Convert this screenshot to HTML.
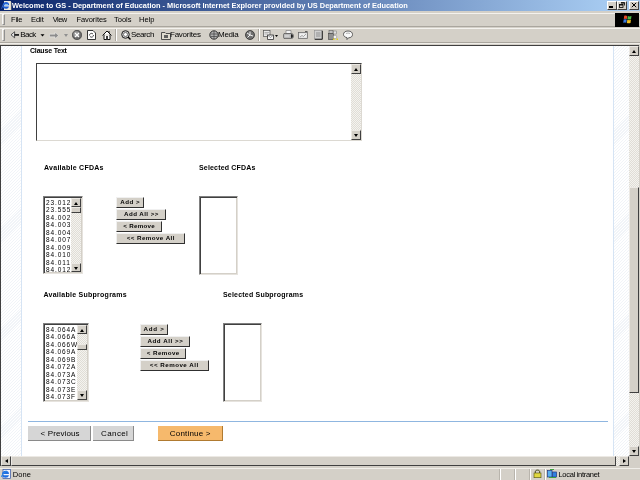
<!DOCTYPE html>
<html><head><meta charset="utf-8">
<style>
*{margin:0;padding:0;box-sizing:border-box}
html,body{width:640px;height:480px;overflow:hidden;background:#d4d0c8;font-family:"Liberation Sans",sans-serif}
body{will-change:transform}
.a{position:absolute}
#title{left:0;top:0;width:640px;height:11px;background:linear-gradient(to right,#0a246a 0px,#a6caf0 605px)}
#title .t{left:12px;top:0px;color:#fff;font-weight:bold;font-size:7.4px;line-height:11px;white-space:nowrap}
.tb{background:#d4d0c8;border-top:1px solid #fff;border-left:1px solid #fff;border-right:1px solid #808080;border-bottom:1px solid #808080}
.menu{font-size:7.5px;color:#000;line-height:8px;white-space:nowrap}
.tool{font-size:8px;color:#000;line-height:8px;white-space:nowrap}
#content{left:0;top:45px;width:640px;height:422px;background:#fff;border-top:1px solid #404040;border-left:1px solid #404040}
.stripe{background:repeating-linear-gradient(135deg,#fff 0px,#fff 1.3px,#f1f4f8 1.3px,#f1f4f8 2.1px)}
.lbl{font-family:"Liberation Sans",sans-serif;font-weight:bold;font-size:7px;color:#000;line-height:8px;white-space:nowrap}
.btn{background:#d4d0c8;border-top:1px solid #f0f0f0;border-left:1px solid #f0f0f0;border-right:1px solid #303030;border-bottom:1px solid #303030}
.bt{font-size:6.2px;font-weight:bold;line-height:7px;white-space:nowrap;color:#000}
.inset{background:#fff;border-top:1px solid #808080;border-left:1px solid #808080;border-right:1px solid #e6e3de;border-bottom:1px solid #e6e3de;box-shadow:inset 1px 1px 0 #404040,inset -1px -1px 0 #d4d0c8}
.sbtrack{background:repeating-conic-gradient(#f4f3ef 0 25%,#e0ddd6 0 50%) 0 0/2px 2px}
.sbbtn{background:#d4d0c8;border-top:1px solid #ece9e4;border-left:1px solid #ece9e4;border-right:1px solid #404040;border-bottom:1px solid #404040}
.list{font-size:6.5px;line-height:7.45px;color:#000;white-space:nowrap}
.up,.dn,.lt,.rt{position:absolute;width:0;height:0}
.up,.dn{left:2px;top:2.5px;border-left:2.5px solid transparent;border-right:2.5px solid transparent}
.up{border-bottom:3px solid #000}.dn{border-top:3px solid #000}
.lt,.rt{left:2.5px;top:1.5px;border-top:2.5px solid transparent;border-bottom:2.5px solid transparent}
.lt{border-right:3px solid #000}.rt{border-left:3px solid #000}
.st{font-size:7.5px;line-height:8px;color:#000;white-space:nowrap}
.ft{font-size:8px;line-height:8px;color:#000;white-space:nowrap}
</style></head><body>
<!-- title bar -->
<div id="title" class="a">
  <svg class="a" style="left:1px;top:0px" width="11" height="11" viewBox="0 0 11 11">
 <rect x="3" y="1" width="7" height="9" fill="#f0ece0"/>
 <path d="M9 1 L10 2 L10 10" stroke="#c0b8a0" stroke-width="0.6" fill="none"/>
 <path d="M1.6 5.6 C1.6 3.2 3.2 2 5 2 C6.9 2 8.2 3.2 8.2 5.2 L3.6 5.2 M3.6 6.4 L8 6.4 C7.6 8 6.4 8.8 4.9 8.8 C3 8.8 1.6 7.8 1.6 5.6 Z" fill="#1e5fd8"/>
 <rect x="3.6" y="4.2" width="3.3" height="1.2" fill="#a8d8f8"/>
 <path d="M0.6 8.8 C1 6.5 2.5 4 5.5 2.6" stroke="#3a70d0" stroke-width="0.8" fill="none"/>
</svg>
  <div class="a t">Welcome to GS - Department of Education - Microsoft Internet Explorer provided by US Department of Education</div>
</div>

<!-- separator under title -->
<div class="a" style="left:0;top:11px;width:640px;height:1px;background:#d4d0c8"></div>
<!-- menu band -->
<div class="a" style="left:0;top:13px;width:640px;height:1px;background:#f4f2ee"></div>
<div class="a" style="left:0;top:26px;width:640px;height:1px;background:#aaa69e"></div>
<div class="a" style="left:2px;top:14px;width:3px;height:11px;border-left:1px solid #f8f8f8;border-top:1px solid #f8f8f8;border-right:1px solid #909090;border-bottom:1px solid #909090"></div>
<div id="mn1" class="a menu" style="left:11px;top:16px;letter-spacing:-0.2px">File</div>
<div id="mn2" class="a menu" style="left:31px;top:16px;letter-spacing:-0.067px">Edit</div>
<div id="mn3" class="a menu" style="left:52.8px;top:16px;letter-spacing:-0.6px">View</div>
<div id="mn4" class="a menu" style="left:76.4px;top:16px;letter-spacing:-0.05px">Favorites</div>
<div id="mn5" class="a menu" style="left:114px;top:16px;letter-spacing:0px">Tools</div>
<div id="mn6" class="a menu" style="left:139px;top:16px;letter-spacing:0px">Help</div>
<!-- windows logo box -->
<div class="a" style="left:615px;top:13px;width:24px;height:14px;background:#000"></div>
<svg class="a" style="left:622px;top:15px" width="11" height="9" viewBox="0 0 11 9">
 <path d="M2.2 0.8 Q3.5 0.2 5.2 0.9 L4.8 4 Q3.2 3.4 1.8 4 Z" fill="#e84a28"/>
 <path d="M5.8 1.1 Q7.5 1.8 9.5 1 L9 4.2 Q7.2 4.9 5.4 4.2 Z" fill="#48b848"/>
 <path d="M1.7 4.6 Q3.2 4 4.7 4.6 L4.3 7.8 Q2.8 7.2 1.2 7.8 Z" fill="#3878e0"/>
 <path d="M5.3 4.8 Q7.1 5.5 8.9 4.8 L8.5 8 Q6.7 8.6 4.9 8 Z" fill="#f0c020"/>
</svg>
<!-- toolbar band -->
<div class="a" style="left:0;top:28px;width:640px;height:1px;background:#f4f2ee"></div>
<div class="a" style="left:0;top:42px;width:640px;height:1px;background:#aaa69e"></div>
<div class="a" style="left:2px;top:29px;width:3px;height:12px;border-left:1px solid #f8f8f8;border-top:1px solid #f8f8f8;border-right:1px solid #909090;border-bottom:1px solid #909090"></div>
<div class="a" style="left:0;top:43px;width:640px;height:1px;background:#f0eee9"></div>

<!-- content frame -->
<div class="a" style="left:0;top:45px;width:639px;height:421px;background:#fff;border-top:1px solid #404040;border-left:1px solid #404040"></div>
<div class="a stripe" style="left:1px;top:46px;width:20px;height:410px"></div>
<div class="a" style="left:21px;top:46px;width:1px;height:410px;background:#d6e4f4"></div>
<div class="a" style="left:613px;top:46px;width:1px;height:410px;background:#d6e4f4"></div>
<div class="a stripe" style="left:614px;top:46px;width:15px;height:410px"></div>
<!-- vertical scrollbar -->
<div class="a sbtrack" style="left:629px;top:46px;width:10px;height:410px"></div>
<div class="a sbbtn" style="left:629px;top:46px;width:10px;height:10px"><div class="up"></div></div>
<div class="a sbbtn" style="left:629px;top:187px;width:10px;height:206px"></div>
<div class="a sbbtn" style="left:629px;top:446px;width:10px;height:10px"><div class="dn"></div></div>
<!-- horizontal scrollbar -->
<div class="a sbtrack" style="left:1px;top:456px;width:628px;height:10px"></div>
<div class="a sbbtn" style="left:1px;top:456px;width:10px;height:10px"><div class="lt"></div></div>
<div class="a sbbtn" style="left:11px;top:456px;width:605px;height:10px"></div>
<div class="a sbbtn" style="left:619px;top:456px;width:10px;height:10px"><div class="rt"></div></div>
<div class="a" style="left:629px;top:456px;width:11px;height:11px;background:#d4d0c8"></div>
<div class="a" style="left:639px;top:45px;width:1px;height:422px;background:#d4d0c8"></div>

<!-- Clause text -->
<div id="l1" class="a lbl" style="left:30px;top:47px;letter-spacing:-0.182px">Clause Text</div>
<div class="a" style="left:36px;top:63px;width:326px;height:78px;background:#fff;border-top:1px solid #404040;border-left:1px solid #404040;border-right:1px solid #dcd9d2;border-bottom:1px solid #dcd9d2"></div>
<div class="a sbtrack" style="left:351px;top:64px;width:10px;height:76px"></div>
<div class="a sbbtn" style="left:351px;top:64px;width:10px;height:10px"><div class="up"></div></div>
<div class="a sbbtn" style="left:351px;top:130px;width:10px;height:10px"><div class="dn"></div></div>

<!-- CFDAs -->
<div id="l2" class="a lbl" style="left:44px;top:164px;letter-spacing:0.267px">Available CFDAs</div>
<div id="l3" class="a lbl" style="left:199px;top:164px;letter-spacing:0.179px">Selected CFDAs</div>
<div class="a inset" style="left:43px;top:196px;width:40px;height:78px"></div>
<div id="l6" class="a list" style="left:46px;top:199px;letter-spacing:0.9px">23.012<br>23.555<br>84.002<br>84.003<br>84.004<br>84.007<br>84.009<br>84.010<br>84.011<br>84.012</div>
<div class="a sbtrack" style="left:71px;top:198px;width:10px;height:74px"></div>
<div class="a sbbtn" style="left:71px;top:198px;width:10px;height:9px"><div class="up"></div></div>
<div class="a sbbtn" style="left:71px;top:207px;width:10px;height:6px"></div>
<div class="a sbbtn" style="left:71px;top:263px;width:10px;height:9px"><div class="dn"></div></div>
<div class="a btn" style="left:116px;top:197px;width:28px;height:11px"><span id="b1" class="a bt" style="left:3.2px;top:0px;letter-spacing:0.5px">Add &gt;</span></div>
<div class="a btn" style="left:116px;top:209px;width:50px;height:11px"><span id="b2" class="a bt" style="left:7px;top:0px;letter-spacing:0.444px">Add All &gt;&gt;</span></div>
<div class="a btn" style="left:116px;top:221px;width:46px;height:11px"><span id="b3" class="a bt" style="left:6.2px;top:0px;letter-spacing:0.313px">&lt; Remove</span></div>
<div class="a btn" style="left:116px;top:233px;width:69px;height:11px"><span id="b4" class="a bt" style="left:9.8px;top:0px;letter-spacing:0.434px">&lt;&lt; Remove All</span></div>
<div class="a inset" style="left:199px;top:196px;width:39px;height:79px"></div>

<!-- Subprograms -->
<div id="l4" class="a lbl" style="left:43.5px;top:291px;letter-spacing:0.261px">Available Subprograms</div>
<div id="l5" class="a lbl" style="left:223px;top:291px;letter-spacing:0.2px">Selected Subprograms</div>
<div class="a inset" style="left:43px;top:323px;width:46px;height:79px"></div>
<div id="l7" class="a list" style="left:46px;top:326px;letter-spacing:0.85px">84.064A<br>84.066A<br>84.066W<br>84.069A<br>84.069B<br>84.072A<br>84.073A<br>84.073C<br>84.073E<br>84.073F</div>
<div class="a sbtrack" style="left:77px;top:325px;width:10px;height:75px"></div>
<div class="a sbbtn" style="left:77px;top:325px;width:10px;height:9px"><div class="up"></div></div>
<div class="a sbbtn" style="left:77px;top:344px;width:10px;height:6px"></div>
<div class="a sbbtn" style="left:77px;top:390px;width:10px;height:10px"><div class="dn"></div></div>
<div class="a btn" style="left:140px;top:324px;width:28px;height:11px"><span id="b5" class="a bt" style="left:2.6px;top:0px;letter-spacing:0.7px">Add &gt;</span></div>
<div class="a btn" style="left:140px;top:336px;width:50px;height:11px"><span id="b6" class="a bt" style="left:6.4px;top:0px;letter-spacing:0.555px">Add All &gt;&gt;</span></div>
<div class="a btn" style="left:140px;top:348px;width:46px;height:11px"><span id="b7" class="a bt" style="left:5.8px;top:0px;letter-spacing:0.431px">&lt; Remove</span></div>
<div class="a btn" style="left:140px;top:360px;width:69px;height:11px"><span id="b8" class="a bt" style="left:8.8px;top:0px;letter-spacing:0.5px">&lt;&lt; Remove All</span></div>
<div class="a inset" style="left:223px;top:323px;width:39px;height:79px"></div>

<!-- footer -->
<div class="a" style="left:28px;top:421px;width:580px;height:1px;background:#8fb6e0"></div>
<div class="a fbtn" style="left:28px;top:426px;width:63px;height:15px;background:#d6d6d6;border-right:1px solid #8a8a8a;border-bottom:1px solid #8a8a8a"><span id="f1" class="a ft" style="left:12.6px;top:4px;letter-spacing:0.112px">&lt; Previous</span></div>
<div class="a fbtn" style="left:93px;top:426px;width:41px;height:15px;background:#d6d6d6;border-right:1px solid #8a8a8a;border-bottom:1px solid #8a8a8a"><span id="f2" class="a ft" style="left:8px;top:4px;letter-spacing:0.4px">Cancel</span></div>
<div class="a fbtn" style="left:158px;top:426px;width:65px;height:15px;background:#f6b96c;border-right:1px solid #b07a30;border-bottom:1px solid #b07a30"><span id="f3" class="a ft" style="left:11.8px;top:4px;letter-spacing:0.196px">Continue &gt;</span></div>

<!-- status bar -->
<div class="a" style="left:0;top:466px;width:640px;height:14px;background:#d4d0c8"></div>
<div class="a" style="left:0;top:468px;width:640px;height:1px;background:#f0eee9"></div>
<div class="a" style="left:499px;top:469px;width:2px;height:11px;border-left:1px solid #b8b4ac;border-right:1px solid #fff"></div>
<div class="a" style="left:514px;top:469px;width:2px;height:11px;border-left:1px solid #b8b4ac;border-right:1px solid #fff"></div>
<div class="a" style="left:529px;top:469px;width:2px;height:11px;border-left:1px solid #b8b4ac;border-right:1px solid #fff"></div>
<div class="a" style="left:544px;top:469px;width:2px;height:11px;border-left:1px solid #b8b4ac;border-right:1px solid #fff"></div>
<svg class="a" style="left:1px;top:469px" width="10" height="10" viewBox="0 0 10 10">
 <rect x="2" y="0.5" width="7.5" height="9" fill="#f0f4fc" stroke="#3050a0" stroke-width="0.7"/>
 <path d="M1 5.5 C1 3 2.8 1.8 4.6 1.8 C6.5 1.8 8 3 8 5 L3 5 M3 6.3 L8 6.3 C7.6 8 6.3 8.8 4.6 8.8 C2.7 8.8 1 7.8 1 5.5 Z" fill="#1f6fe0"/>
 <path d="M0.3 8 C1 5.5 3 3 6 2" stroke="#2a8ae8" stroke-width="0.9" fill="none"/>
</svg>
<div id="s1" class="a st" style="left:12.8px;top:471px;letter-spacing:0.067px">Done</div>
<svg class="a" style="left:533px;top:469px" width="9" height="9" viewBox="0 0 9 9">
 <path d="M2.3 4 L2.3 2.6 C2.3 0.6 6.7 0.6 6.7 2.6 L6.7 4" stroke="#404010" stroke-width="1" fill="none"/>
 <rect x="1" y="4" width="7" height="4.7" fill="#e0d840" stroke="#505010" stroke-width="0.6"/>
</svg>
<svg class="a" style="left:547px;top:469px" width="10" height="9" viewBox="0 0 10 9">
 <rect x="0.5" y="1.5" width="4.5" height="6.5" fill="#58b0f0" stroke="#203880" stroke-width="0.7"/>
 <rect x="5.5" y="3" width="4" height="5" fill="#3080e0" stroke="#203880" stroke-width="0.7"/>
 <path d="M3 0.5 L7 0.5 M2 8.5 L9 8.5" stroke="#40a040" stroke-width="1"/>
</svg>
<div id="s2" class="a st" style="left:558.5px;top:471px;letter-spacing:-0.3px">Local intranet</div>

<!-- toolbar contents -->
<svg class="a" style="left:10px;top:31px" width="10" height="8" viewBox="0 0 10 8">
 <path d="M1 3.8 L4.6 0.8 L4.6 6.8 Z" fill="#e8e8e8" stroke="#303030" stroke-width="0.8" stroke-linejoin="round"/>
 <rect x="4.4" y="3" width="4.6" height="1.8" fill="#202020"/>
</svg>
<div id="tb1" class="a tool" style="left:20.2px;top:31px;letter-spacing:-0.534px">Back</div>
<svg class="a" style="left:40px;top:34px" width="5" height="3" viewBox="0 0 5 3"><path d="M0.5 0.3 L4.5 0.3 L2.5 2.6 Z" fill="#000"/></svg>
<svg class="a" style="left:49px;top:32px" width="10" height="7" viewBox="0 0 10 7">
 <path d="M9.5 3.5 L6 0.3 L6 2.2 L0.5 2.2 L0.5 4.8 L6 4.8 L6 6.7 Z" fill="#8c8c8c" stroke="#f0f0f0" stroke-width="0.5"/>
</svg>
<svg class="a" style="left:64px;top:34px" width="4" height="3" viewBox="0 0 4 3"><path d="M0 0 L4 0 L2 3 Z" fill="#909090"/></svg>
<svg class="a" style="left:72px;top:30px" width="10" height="10" viewBox="0 0 10 10">
 <circle cx="5" cy="5" r="4.7" fill="#6a6a6a" stroke="#303030" stroke-width="0.6"/>
 <circle cx="4.4" cy="4.2" r="3" fill="#9a9a9a"/>
 <path d="M3 3 L7 7 M7 3 L3 7" stroke="#fff" stroke-width="1.1"/>
</svg>
<svg class="a" style="left:87px;top:30px" width="9" height="10" viewBox="0 0 9 10">
 <path d="M0.5 0.5 L6 0.5 L8.5 3 L8.5 9.5 L0.5 9.5 Z" fill="#fff" stroke="#202020" stroke-width="0.9"/>
 <path d="M2.5 5.5 A2 2 0 0 1 6 4 M6.5 5 A2 2 0 0 1 3 6.5" stroke="#404040" stroke-width="0.9" fill="none"/>
</svg>
<svg class="a" style="left:102px;top:30px" width="10" height="10" viewBox="0 0 10 10">
 <path d="M0.5 5.5 L5 1 L9.5 5.5 M2 4.5 L2 9.5 L8 9.5 L8 4.5 M7 1 L7 3" stroke="#101010" stroke-width="1" fill="#fff"/>
 <rect x="4" y="6" width="2" height="3.5" fill="#404040"/>
</svg>
<div class="a" style="left:115px;top:29px;width:2px;height:12px;border-left:1px solid #aaa69e;border-right:1px solid #fff"></div>
<svg class="a" style="left:121px;top:30px" width="10" height="10" viewBox="0 0 10 10">
 <circle cx="4.5" cy="4.5" r="3.8" fill="#c8c8c8" stroke="#202020" stroke-width="1"/>
 <circle cx="4.5" cy="4.5" r="2" fill="#fff" stroke="#505050" stroke-width="0.7"/>
 <path d="M7 7 L9.5 9.5" stroke="#000" stroke-width="1.4"/>
</svg>
<div id="tb2" class="a tool" style="left:131px;top:31px;letter-spacing:-0.4px">Search</div>
<svg class="a" style="left:161px;top:31px" width="10" height="9" viewBox="0 0 10 9">
 <path d="M0.5 1.5 L4 1.5 L5 2.5 L9.5 2.5 L9.5 8.5 L0.5 8.5 Z" fill="#e0dcd0" stroke="#404040" stroke-width="0.9"/>
 <rect x="3" y="4" width="4" height="3" fill="#606060"/>
</svg>
<div id="tb3" class="a tool" style="left:170px;top:31px;letter-spacing:-0.25px">Favorites</div>
<svg class="a" style="left:209px;top:30px" width="10" height="10" viewBox="0 0 10 10">
 <circle cx="5" cy="5" r="4.2" fill="#b0b0b0" stroke="#202020" stroke-width="0.9"/>
 <path d="M1.5 4 L8.5 4 M1.5 6.5 L8.5 6.5 M5 1 L5 9" stroke="#404040" stroke-width="0.7"/>
</svg>
<div id="tb4" class="a tool" style="left:218px;top:31px;letter-spacing:-0.25px">Media</div>
<svg class="a" style="left:245px;top:30px" width="10" height="10" viewBox="0 0 10 10">
 <circle cx="5" cy="5" r="4.5" fill="#707070" stroke="#202020" stroke-width="0.7"/>
 <path d="M5 5 L5 1.5 M5 5 L8 6 M5 5 L2.5 7.5 M5 5 L2 3" stroke="#fff" stroke-width="0.9"/>
</svg>
<div class="a" style="left:258px;top:29px;width:2px;height:12px;border-left:1px solid #aaa69e;border-right:1px solid #fff"></div>
<svg class="a" style="left:263px;top:30px" width="16" height="10" viewBox="0 0 16 10">
 <rect x="0.5" y="0.5" width="6.5" height="6" fill="#e8e8e8" stroke="#505050" stroke-width="0.7"/>
 <path d="M1.5 2.5 L6 2.5 M1.5 4 L5 4" stroke="#909090" stroke-width="0.6"/>
 <path d="M4.5 5 L10.5 5 L10.5 9.5 L4.5 9.5 Z" fill="#f6f6f6" stroke="#303030" stroke-width="0.8"/>
 <path d="M4.5 5 L7.5 7.5 L10.5 5" stroke="#606060" stroke-width="0.6" fill="none"/>
 <path d="M12 5 L15 5 L13.5 7 Z" fill="#000"/>
</svg>
<svg class="a" style="left:283px;top:30px" width="11" height="10" viewBox="0 0 11 10">
 <path d="M3 0.5 L8 0.5 L8 3.5 L3 3.5 Z" fill="#f4f4f4" stroke="#707070" stroke-width="0.6"/>
 <path d="M1 3.5 L8.5 3.5 Q10.5 3.5 10.5 6 Q10.5 8.5 8.5 8.5 L1 8.5 Q0.5 8.5 0.5 6 Q0.5 3.5 1 3.5 Z" fill="#b8b8b8" stroke="#404040" stroke-width="0.6"/>
 <path d="M8 4 Q10 4.5 10 6 Q10 8 8 8 Z" fill="#202020"/>
 <rect x="1.5" y="5.5" width="5" height="1" fill="#e8e8e8"/>
</svg>
<svg class="a" style="left:298px;top:31px" width="10" height="8" viewBox="0 0 10 8">
 <rect x="0.5" y="1.5" width="9" height="6" fill="#d8d8d8" stroke="#606060" stroke-width="0.7"/>
 <rect x="1.5" y="2.5" width="7" height="4" fill="#f0f0f0"/>
 <path d="M2 6 L4 4.5 L5.5 5.5 L8 3" stroke="#808080" stroke-width="0.7" fill="none"/>
 <path d="M7 0.5 L9.5 0.5" stroke="#404040" stroke-width="0.8"/>
</svg>
<svg class="a" style="left:314px;top:30px" width="9" height="10" viewBox="0 0 9 10">
 <rect x="0.5" y="0.5" width="7.5" height="8.5" fill="#d0d0d0" stroke="#909090" stroke-width="0.6"/>
 <path d="M8.3 0.8 L8.3 9.3 L0.8 9.3" stroke="#202020" stroke-width="1" fill="none"/>
 <rect x="2" y="2" width="4.5" height="5" fill="#b0b0b0"/>
</svg>
<svg class="a" style="left:328px;top:30px" width="10" height="10" viewBox="0 0 10 10">
 <rect x="1" y="0.5" width="4" height="3" fill="#c0c0c0" stroke="#606060" stroke-width="0.6"/>
 <rect x="0.5" y="3.5" width="5" height="6" fill="#909090" stroke="#404040" stroke-width="0.6"/>
 <rect x="5.5" y="1" width="3" height="3" fill="#e0e0e0" stroke="#707070" stroke-width="0.5"/>
 <circle cx="7" cy="7" r="1.8" fill="#f4f4f4" stroke="#808080" stroke-width="0.5"/>
 <rect x="5" y="8.5" width="1.5" height="1.5" fill="#e0d020"/><rect x="8.5" y="8.5" width="1.5" height="1.5" fill="#e0d020"/>
</svg>
<svg class="a" style="left:343px;top:30px" width="10" height="10" viewBox="0 0 10 10">
 <path d="M5 1 C8 1 9.5 2.5 9.5 4.5 C9.5 6.5 8 7.8 5.5 7.8 L4 9.5 L4 7.6 C1.8 7.2 0.5 6 0.5 4.5 C0.5 2.5 2 1 5 1 Z" fill="#f8f8f8" stroke="#404040" stroke-width="0.8"/>
 <path d="M3 3.5 Q5 2.5 7 3.5" stroke="#a0a0a0" stroke-width="0.8" fill="none"/>
</svg>

<!-- title buttons -->
<div class="a" style="left:607px;top:1px;width:10px;height:9px;background:#d4d0c8;border-top:1px solid #fff;border-left:1px solid #fff;border-right:1px solid #404040;border-bottom:1px solid #404040"></div>
<div class="a" style="left:609px;top:6px;width:4px;height:1.5px;background:#000"></div>
<div class="a" style="left:617px;top:1px;width:10px;height:9px;background:#d4d0c8;border-top:1px solid #fff;border-left:1px solid #fff;border-right:1px solid #404040;border-bottom:1px solid #404040"></div>
<svg class="a" style="left:619px;top:2px" width="6" height="6" viewBox="0 0 6 6">
 <path d="M2 0.5 L5.5 0.5 L5.5 3.5 M2 1.2 L5.5 1.2" stroke="#000" stroke-width="0.8" fill="none"/>
 <rect x="0.5" y="2.5" width="3.5" height="3" fill="none" stroke="#000" stroke-width="0.8"/>
 <path d="M0.5 3 L4 3" stroke="#000" stroke-width="0.9"/>
</svg>
<div class="a" style="left:629px;top:1px;width:10px;height:9px;background:#d4d0c8;border-top:1px solid #fff;border-left:1px solid #fff;border-right:1px solid #404040;border-bottom:1px solid #404040"></div>
<svg class="a" style="left:631px;top:2px" width="6" height="6" viewBox="0 0 6 6">
 <path d="M0.8 0.8 L5.2 5.2 M5.2 0.8 L0.8 5.2" stroke="#000" stroke-width="1"/>
</svg>
</body></html>
